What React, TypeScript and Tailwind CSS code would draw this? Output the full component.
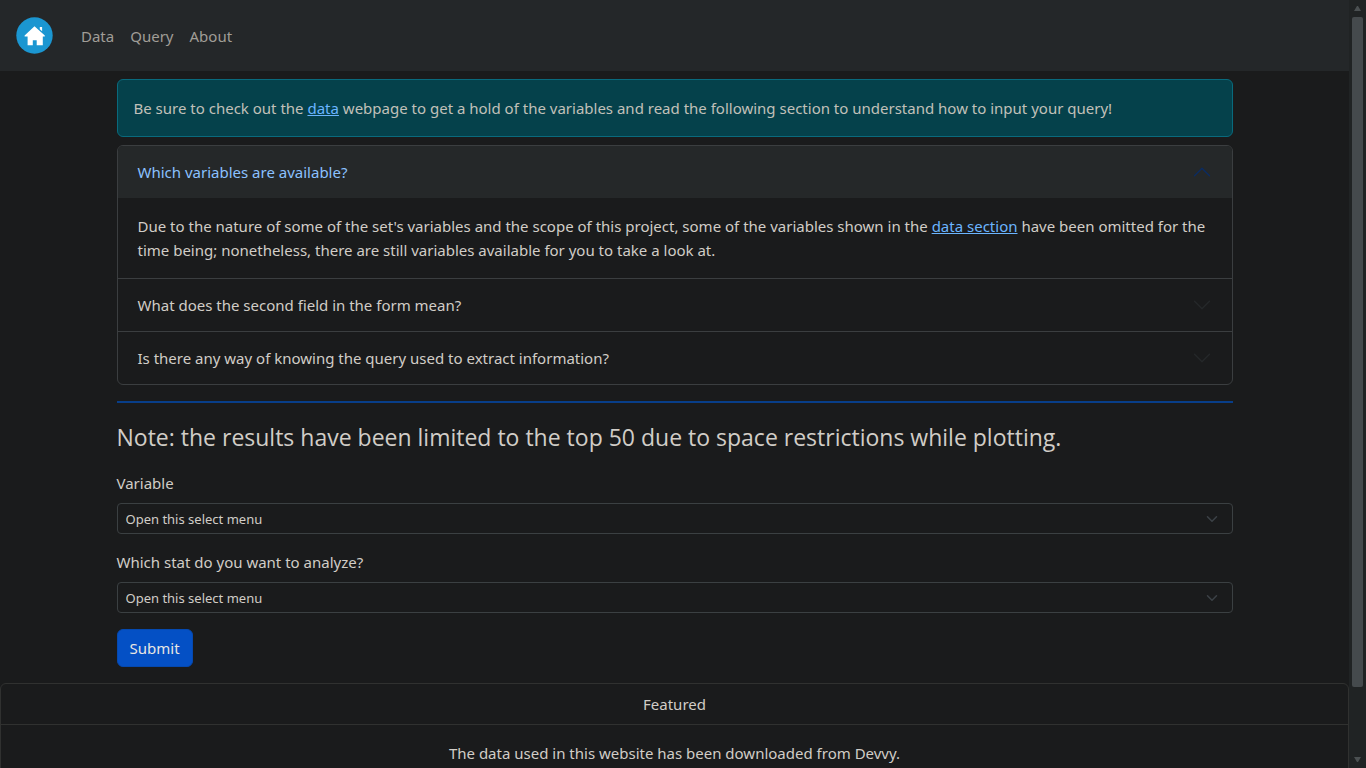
import { useState, type ReactNode } from "react";

const stats = ["Count", "Average", "Maximum", "Minimum"];
const variables = ["Country", "Language", "Year"];

function Chevron({ open }: { open: boolean }) {
  return (
    <svg
      viewBox="0 0 16 16"
      aria-hidden="true"
      className={open ? "size-5 shrink-0 rotate-180 text-[#0b2c63]" : "size-5 shrink-0 text-[#25282a]"}
    >
      <path
        fill="currentColor"
        fillRule="evenodd"
        d="M1.646 4.646a.5.5 0 0 1 .708 0L8 10.293l5.646-5.647a.5.5 0 0 1 .708.708l-6 6a.5.5 0 0 1-.708 0l-6-6a.5.5 0 0 1 0-.708z"
      />
    </svg>
  );
}

function AccordionItem({
  title,
  open,
  onToggle,
  children,
}: {
  title: string;
  open: boolean;
  onToggle: () => void;
  children: ReactNode;
}) {
  return (
    <div>
      <h2>
        <button
          type="button"
          aria-expanded={open}
          onClick={onToggle}
          className={
            open
              ? "flex h-[52px] w-full items-center justify-between bg-[#252829] px-5 text-left text-[#8bc1ff]"
              : "flex h-[52px] w-full items-center justify-between px-5 text-left"
          }
        >
          {title}
          <Chevron open={open} />
        </button>
      </h2>
      {open && <div className="px-5 py-4">{children}</div>}
    </div>
  );
}

function SelectField({ id, label, options }: { id: string; label: string; options: string[] }) {
  return (
    <div className="mb-4">
      <label htmlFor={id} className="mb-2 block">
        {label}
      </label>
      <div className="relative">
        <select
          id={id}
          className="block h-[31px] w-full appearance-none rounded border border-[#3b4042] bg-[#1a1b1c] pr-9 pl-2 text-[13px]"
        >
          <option>Open this select menu</option>
          {options.map((o) => (
            <option key={o}>{o}</option>
          ))}
        </select>
        <svg
          viewBox="0 0 16 16"
          aria-hidden="true"
          className="pointer-events-none absolute top-2 right-[15px] h-4 w-3 text-[#3c4247]"
        >
          <path
            fill="none"
            stroke="currentColor"
            strokeWidth="2"
            strokeLinecap="round"
            strokeLinejoin="round"
            d="m2 5 6 6 6-6"
          />
        </svg>
      </div>
    </div>
  );
}

export default function App() {
  const [openItem, setOpenItem] = useState(0);
  const toggle = (i: number) => setOpenItem(openItem === i ? -1 : i);

  return (
    <div className="flex h-screen overflow-hidden bg-[#1a1b1c] font-['Noto_Sans','Open_Sans',sans-serif] text-[15px] leading-6 text-[#d1cdc7]">
      <div className="min-w-0 flex-1 overflow-hidden">
        <nav className="flex h-[71px] items-center bg-[#242729] px-4 text-[#a09d97]">
          <a href="#home" aria-label="Home" className="mr-7">
            <svg viewBox="0 0 37 37" className="size-[37px]" aria-hidden="true">
              <circle cx="18.5" cy="18.5" r="18.2" fill="#1b96d1" />
              <path
                fill="#fff"
                d="M18.5 9.2 8.6 18.6v.9h3v8.7h5.2v-5h3.9v5h6.1v-8.7h2v-.9z"
              />
              <path fill="#fff" d="M23.8 10h2.3v4.2l-2.3-2z" />
            </svg>
          </a>
          <div className="flex gap-4">
            <a href="#data">Data</a>
            <a href="#query">Query</a>
            <a href="#about">About</a>
          </div>
        </nav>

        <main className="mx-auto max-w-[1140px] px-3 pt-2">
          <div role="alert" className="mb-2 rounded-md border border-[#096a7d] bg-[#05414b] p-4 text-[#c1c0b9]">
            Be sure to check out the{" "}
            <a href="#data" className="text-[#6bb5ff] underline">
              data
            </a>{" "}
            webpage to get a hold of the variables and read the following section to understand how to input your query!
          </div>

          <div className="divide-y divide-[#3b3e40] overflow-hidden rounded-md border border-[#3b3e40]">
            <AccordionItem title="Which variables are available?" open={openItem === 0} onToggle={() => toggle(0)}>
              Due to the nature of some of the set's variables and the scope of this project, some of the variables shown
              in the{" "}
              <a href="#data" className="text-[#6bb5ff] underline">
                data section
              </a>{" "}
              have been omitted for the time being; nonetheless, there are still variables available for you to take a
              look at.
            </AccordionItem>
            <AccordionItem
              title="What does the second field in the form mean?"
              open={openItem === 1}
              onToggle={() => toggle(1)}
            >
              It selects the stat that is computed for the chosen variable.
            </AccordionItem>
            <AccordionItem
              title="Is there any way of knowing the query used to extract information?"
              open={openItem === 2}
              onToggle={() => toggle(2)}
            >
              The query is shown together with its results.
            </AccordionItem>
          </div>

          <hr className="my-4 border-t-2 border-[#083e89]" />

          <p className="mb-4 font-['Open_Sans','Noto_Sans',sans-serif] text-[23px] leading-9">
            Note: the results have been limited to the top 50 due to space restrictions while plotting.
          </p>

          <form onSubmit={(e) => e.preventDefault()}>
            <SelectField id="variable" label="Variable" options={variables} />
            <SelectField id="stat" label="Which stat do you want to analyze?" options={stats} />
            <button
              type="submit"
              className="mb-4 h-[38px] rounded-md border border-[#0549b0] bg-[#0450c5] px-3 text-[#e8e6e3]"
            >
              Submit
            </button>
          </form>
        </main>

        <footer className="rounded-md border border-[#303130] text-center">
          <div className="border-b border-[#303130] px-4 py-2">Featured</div>
          <p className="p-4">The data used in this website has been downloaded from Devvy.</p>
        </footer>
      </div>

      <div aria-hidden="true" className="flex w-[17px] shrink-0 flex-col items-center bg-[#202324] text-[#4b5052]">
        <svg viewBox="0 0 17 17" className="size-[17px] shrink-0">
          <path fill="currentColor" d="M5 11 8 6h1l3 5z" />
        </svg>
        <div className="w-[11px] grow rounded-[2px] bg-[#454a4d]" />
        <div className="h-16 shrink-0" />
        <svg viewBox="0 0 17 17" className="size-[17px] shrink-0">
          <path fill="currentColor" d="M5 6h7l-3 5H8z" />
        </svg>
      </div>
    </div>
  );
}
